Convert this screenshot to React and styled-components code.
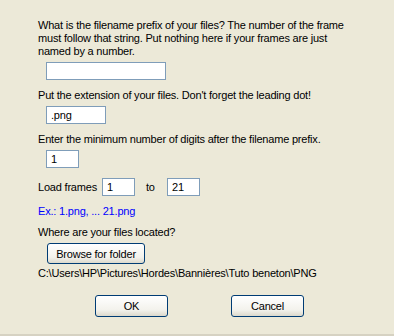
import React, { useState } from "react";
import styled, { createGlobalStyle } from "styled-components";

const GlobalStyle = createGlobalStyle`
  html, body {
    margin: 0;
    padding: 0;
    background: #ece9d8;
  }
`;

export default function App() {
  const [prefix, setPrefix] = useState("");
  const [ext, setExt] = useState(".png");
  const [digits, setDigits] = useState("1");
  const [from, setFrom] = useState("1");
  const [to, setTo] = useState("21");

  return (
    <>
      <GlobalStyle />
      <Dialog>
        <Label>
          What is the filename prefix of your files? The number of the frame
          must follow that string. Put nothing here if your frames are just
          named by a number.
        </Label>
        <Field $w={120} value={prefix} onChange={(e) => setPrefix(e.target.value)} />

        <Label $top={9}>Put the extension of your files. Don't forget the leading dot!</Label>
        <Field $w={60} value={ext} onChange={(e) => setExt(e.target.value)} />

        <Label $top={9}>Enter the minimum number of digits after the filename prefix.</Label>
        <Field $w={33} value={digits} onChange={(e) => setDigits(e.target.value)} />

        <FramesRow>
          <span>Load frames</span>
          <Field $w={33} $inline value={from} onChange={(e) => setFrom(e.target.value)} />
          <ToText>to</ToText>
          <Field $w={33} $inline value={to} onChange={(e) => setTo(e.target.value)} />
        </FramesRow>

        <Example>Ex.: {from}{ext}, ... {to}{ext}</Example>

        <Label $top={8}>Where are your files located?</Label>
        <BrowseButton>Browse for folder</BrowseButton>
        <Path>C:\Users\HP\Pictures\Hordes\Bannières\Tuto beneton\PNG</Path>

        <Buttons>
          <XpButton>OK</XpButton>
          <XpButton>Cancel</XpButton>
        </Buttons>
      </Dialog>
    </>
  );
}

const Dialog = styled.div`
  width: 394px;
  height: 336px;
  box-sizing: border-box;
  padding: 19px 0 0 38px;
  background: #ece9d8;
  border-bottom: 2px solid #d6d2c2;
  font-family: Tahoma, "Liberation Sans", Arial, sans-serif;
  font-size: 11px;
  letter-spacing: -0.2px;
  color: #000;
  display: flex;
  flex-direction: column;
  align-items: flex-start;
`;

const Label = styled.div`
  line-height: 13px;
  margin-top: ${(p) => p.$top || 0}px;
  width: 318px;
`;

const Field = styled.input`
  width: ${(p) => p.$w}px;
  height: 18px;
  box-sizing: border-box;
  margin: ${(p) => (p.$inline ? "0" : "4px 0 0 8px")};
  padding: 0 4px;
  border: 1px solid #7f9db9;
  background: #fff;
  font-family: inherit;
  font-size: 11px;
  letter-spacing: inherit;
  color: #000;
  outline: none;
`;

const FramesRow = styled.div`
  display: flex;
  align-items: center;
  height: 18px;
  margin-top: 10px;
  line-height: 13px;
  white-space: nowrap;

  & > span:first-child {
    width: 64px;
  }
`;

const ToText = styled.span`
  width: 32px;
  box-sizing: border-box;
  padding-left: 11px;
`;

const Example = styled.div`
  color: #0000ff;
  line-height: 13px;
  margin-top: 9px;
`;

const XpButton = styled.button`
  width: 73px;
  height: 22px;
  box-sizing: border-box;
  padding: 0;
  border: 1px solid #003c74;
  border-radius: 3px;
  background: linear-gradient(#ffffff, #f3f2ec 70%, #dcd9cc);
  font-family: inherit;
  font-size: 11px;
  letter-spacing: inherit;
  color: #000;
`;

const BrowseButton = styled(XpButton)`
  width: 98px;
  height: 21px;
  margin: 4px 0 0 9px;
`;

const Path = styled.div`
  line-height: 13px;
  margin-top: 3px;
`;

const Buttons = styled.div`
  display: flex;
  gap: 63px;
  margin: 15px 0 0 57px;
`;
